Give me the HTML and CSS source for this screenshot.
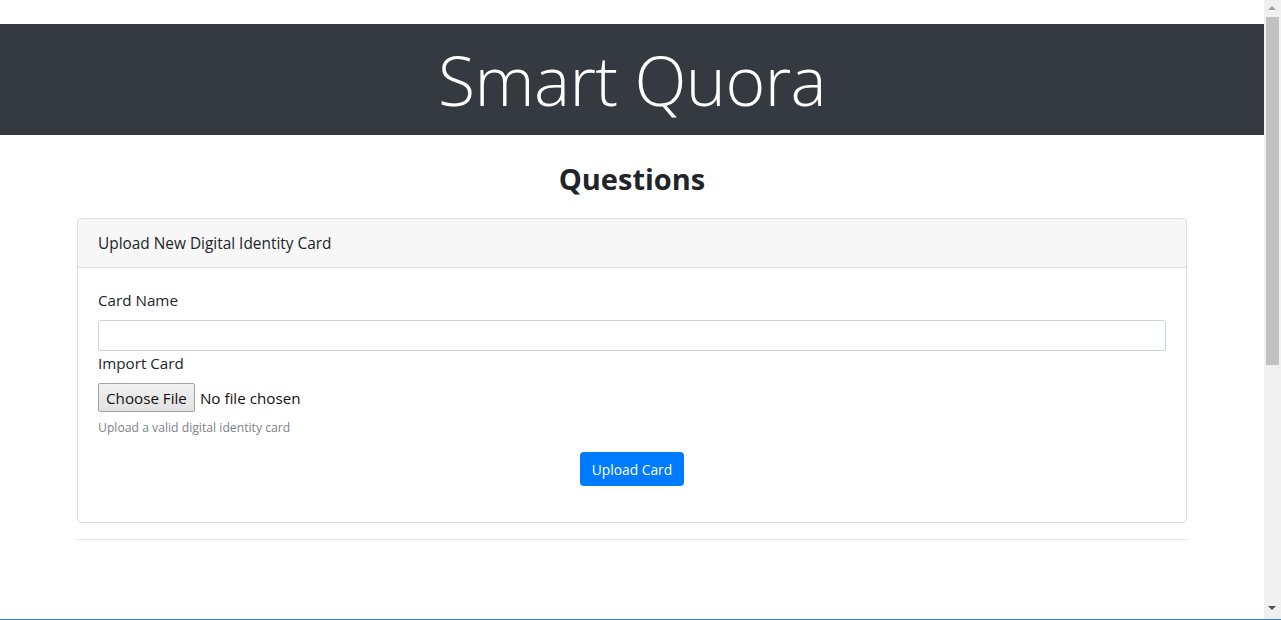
FILE: index.html
```html
<!DOCTYPE html>
<html lang="en">
<head>
<meta charset="utf-8">
<title>Smart Quora</title>
<link rel="stylesheet" href="styles.css">
</head>
<body>
<div class="viewport">
  <div class="page">
    <header class="jumbo">
      <h1 class="brand">Smart Quora</h1>
    </header>
    <main class="container">
      <h2 class="title">Questions</h2>
      <section class="card">
        <div class="card-header">Upload New Digital Identity Card</div>
        <form class="card-body">
          <label class="label" for="cardName">Card Name</label>
          <input class="input" id="cardName" type="text">
          <label class="label label-import">Import Card</label>
          <div class="file-row">
            <span class="file-btn">Choose File</span>
            <span class="file-text">No file chosen</span>
          </div>
          <small class="help">Upload a valid digital identity card</small>
          <div class="actions">
            <button type="button" class="btn-primary">Upload Card</button>
          </div>
        </form>
      </section>
      <hr class="rule">
    </main>
  </div>
  <div class="scrollbar">
    <div class="arrow arrow-up"></div>
    <div class="thumb"></div>
    <div class="track-rest"></div>
    <div class="arrow arrow-down"></div>
  </div>
</div>
</body>
</html>
```

FILE: styles.css
```css
* { box-sizing: border-box; }
html, body { margin: 0; padding: 0; }
body {
  font-family: "Open Sans", "Noto Sans", sans-serif;
  color: #212529;
  background: #fff;
  overflow: hidden;
}
.viewport {
  display: flex;
  height: 620px;
  border-bottom: 1px solid #2f7ecb;
}
.page {
  flex: 1;
  padding-top: 24px;
  min-width: 0;
}
.jumbo {
  background: #343a40;
  height: 111px;
  display: flex;
  align-items: center;
  justify-content: center;
}
.brand {
  margin: 0;
  color: #fff;
  font-weight: 300;
  font-size: 68px;
  line-height: 1;
  letter-spacing: -0.6px;
}
.container {
  width: 1110px;
  margin: 0 auto;
}
.title {
  margin: 24px 0 19px;
  text-align: center;
  font-size: 29px;
  font-weight: 700;
  line-height: 40px;
}
.card {
  border: 1px solid #dfdfdf;
  border-radius: 4px;
  overflow: hidden;
}
.card-header {
  background: #f7f7f7;
  border-bottom: 1px solid #dfdfdf;
  height: 49px;
  padding: 0 20px;
  display: flex;
  align-items: center;
  font-size: 15.4px;
}
.card-body {
  display: flex;
  flex-direction: column;
  align-items: flex-start;
  padding: 20px 20px 36px;
  margin: 0;
}
.label {
  font-size: 15.2px;
  line-height: 24px;
  margin-bottom: 8px;
}
.input {
  width: 100%;
  height: 31px;
  border: 1px solid #ced4da;
  border-radius: 3px;
  background: #fff;
  font: inherit;
}
.file-row {
  display: flex;
  align-items: center;
  gap: 5px;
  height: 29px;
}
.file-btn {
  display: flex;
  align-items: center;
  height: 29px;
  padding: 0 7px;
  border: 1px solid #a3a3a3;
  border-radius: 2px;
  background: linear-gradient(#f1f1f1, #e2e2e2);
  font-size: 15.2px;
  color: #111;
}
.file-text {
  font-size: 15.2px;
  color: #111;
}
.help {
  margin-top: 6px;
  font-size: 12.2px;
  line-height: 19px;
  color: #7d8389;
}
.actions {
  align-self: stretch;
  display: flex;
  justify-content: center;
  margin-top: 15px;
}
.btn-primary {
  height: 34px;
  width: 104px;
  border: 0;
  border-radius: 4px;
  background: #007bff;
  color: #fff;
  font-family: inherit;
  font-size: 13.8px;
  padding: 0;
}
.rule {
  margin: 16px 0 0;
  border: 0;
  border-top: 1px solid #e5e5e5;
}
.scrollbar {
  width: 17px;
  background: #f0f0f0;
  display: flex;
  flex-direction: column;
  align-items: center;
}
.arrow {
  width: 17px;
  height: 17px;
  position: relative;
  flex: none;
}
.arrow::after {
  content: "";
  position: absolute;
  left: 4px;
  width: 0;
  height: 0;
  border-left: 4px solid transparent;
  border-right: 4px solid transparent;
}
.arrow-up::after {
  top: 6px;
  border-bottom: 4px solid #a3a3a3;
}
.arrow-down { height: 19px; }
.arrow-down::after {
  top: 6px;
  border-top: 4px solid #505050;
}
.thumb {
  width: 13px;
  height: 348px;
  background: #c1c1c1;
  flex: none;
}
.track-rest { flex: 1; }
```
